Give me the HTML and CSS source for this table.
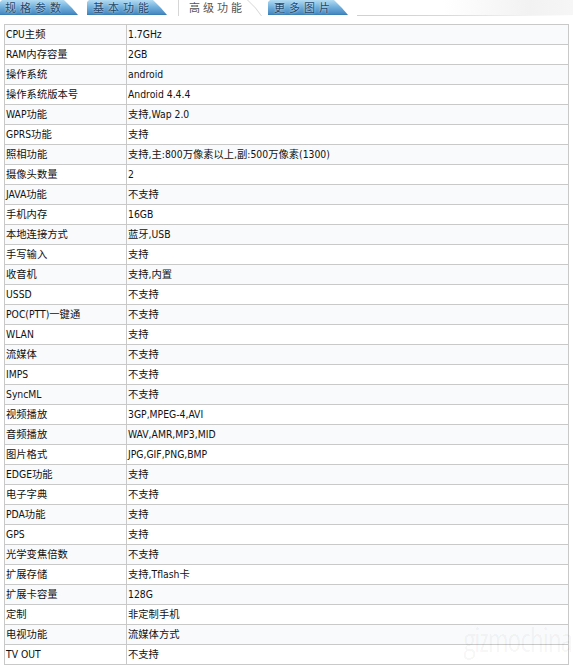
FILE: index.html
```html
<!DOCTYPE html>
<html>
<head>
<meta charset="utf-8">
<link rel="stylesheet" href="styles.css">
</head>
<body>
<div class="page">
  <div class="tabs">
    <div class="tab blue"><span>规格参数</span></div>
    <div class="tab blue"><span>基本功能</span></div>
    <div class="tab active"><div class="inner"><span>高级功能</span></div></div>
    <div class="tab blue"><span>更多图片</span></div>
    <div class="tabfill"></div>
  </div>
  <table class="spec">
    <tr><td class="k">CPU主频</td><td>1.7GHz</td></tr>
    <tr><td class="k">RAM内存容量</td><td>2GB</td></tr>
    <tr><td class="k">操作系统</td><td>android</td></tr>
    <tr><td class="k">操作系统版本号</td><td>Android 4.4.4</td></tr>
    <tr><td class="k">WAP功能</td><td>支持,Wap 2.0</td></tr>
    <tr><td class="k">GPRS功能</td><td>支持</td></tr>
    <tr><td class="k">照相功能</td><td>支持,主:800万像素以上,副:500万像素(1300)</td></tr>
    <tr><td class="k">摄像头数量</td><td>2</td></tr>
    <tr><td class="k">JAVA功能</td><td>不支持</td></tr>
    <tr><td class="k">手机内存</td><td>16GB</td></tr>
    <tr><td class="k">本地连接方式</td><td>蓝牙,USB</td></tr>
    <tr><td class="k">手写输入</td><td>支持</td></tr>
    <tr><td class="k">收音机</td><td>支持,内置</td></tr>
    <tr><td class="k">USSD</td><td>不支持</td></tr>
    <tr><td class="k">POC(PTT)一键通</td><td>不支持</td></tr>
    <tr><td class="k">WLAN</td><td>支持</td></tr>
    <tr><td class="k">流媒体</td><td>不支持</td></tr>
    <tr><td class="k">IMPS</td><td>不支持</td></tr>
    <tr><td class="k">SyncML</td><td>不支持</td></tr>
    <tr><td class="k">视频播放</td><td>3GP,MPEG-4,AVI</td></tr>
    <tr><td class="k">音频播放</td><td>WAV,AMR,MP3,MID</td></tr>
    <tr><td class="k">图片格式</td><td>JPG,GIF,PNG,BMP</td></tr>
    <tr><td class="k">EDGE功能</td><td>支持</td></tr>
    <tr><td class="k">电子字典</td><td>不支持</td></tr>
    <tr><td class="k">PDA功能</td><td>支持</td></tr>
    <tr><td class="k">GPS</td><td>支持</td></tr>
    <tr><td class="k">光学变焦倍数</td><td>不支持</td></tr>
    <tr><td class="k">扩展存储</td><td>支持,Tflash卡</td></tr>
    <tr><td class="k">扩展卡容量</td><td>128G</td></tr>
    <tr><td class="k">定制</td><td>非定制手机</td></tr>
    <tr><td class="k">电视功能</td><td>流媒体方式</td></tr>
    <tr><td class="k">TV OUT</td><td>不支持</td></tr>
  </table>
  <div class="watermark">gizmochina</div>
</div>
</body>
</html>
```
FILE: styles.css
```css
html, body {
  margin: 0;
  padding: 0;
  background: #fff;
}
.page {
  position: relative;
  width: 573px;
  height: 665px;
  overflow: hidden;
  font-family: "DejaVu Sans Condensed", "DejaVu Sans", "Noto Sans CJK SC", sans-serif;
  font-stretch: condensed;
  font-size: 10.3px;
  color: #111;
}
.tabs {
  display: flex;
  height: 16px;
  align-items: flex-start;
}
.tab {
  width: 80px;
  height: 15px;
  margin-right: 9px;
  flex: none;
  font-family: "Noto Sans CJK SC", sans-serif;
  font-size: 11px;
  line-height: 15px;
  letter-spacing: 4px;
  box-sizing: border-box;
}
.tab.blue {
  background: linear-gradient(#b3dbf2, #72b0dc 50%, #4689c0);
  clip-path: polygon(0 2px, 2px 0, calc(100% - 14px) 0, calc(100% - 6px) 8px, 100% 100%, 0 100%);
  color: #23476b;
  text-shadow: 0 0 2px #e8f4fb;
  padding-left: 6px;
  border-bottom: 1px solid #3a7fb6;
}
.tab.blue:first-child {
  width: 78px;
  padding-left: 5px;
}
.tab.active {
  width: 84px;
  height: 16px;
  margin-left: 2px;
  margin-right: 6px;
  background: #d6d6d6;
  clip-path: polygon(0 0, calc(100% - 14px) 0, calc(100% - 6px) 8px, 100% 100%, 0 100%);
  padding: 0 0 0 1px;
  letter-spacing: 3px;
}
.tab.active .inner {
  height: 16px;
  background: #fff;
  clip-path: polygon(0 0, calc(100% - 15px) 0, calc(100% - 7px) 8px, calc(100% - 1px) 100%, 0 100%);
  color: #555;
  padding-left: 10px;
}
.tabfill {
  flex: 1;
  height: 15px;
  border-bottom: 1px solid;
  border-image: linear-gradient(90deg, #d0d0d0, #d8d8d8 40%, #f4f4f4 80%, #fff) 1;
  background: linear-gradient(90deg, #fff 40%, #f2f2f2 80%, #f6f6f6);
}
.spec {
  margin: 8px 0 0 4px;
  width: 565px;
  border-collapse: collapse;
  table-layout: fixed;
}
.spec td {
  height: 19px;
  padding: 0 0 0 1px;
  border: 1px solid #c9c9c9;
  vertical-align: middle;
  white-space: nowrap;
  line-height: 19px;
}
.spec td.k {
  width: 120px;
}
.spec tr:nth-child(odd) td {
  background: #f8fafc;
}
.watermark {
  position: absolute;
  right: 1px;
  top: 622px;
  font-family: "Open Sans", sans-serif;
  font-size: 32px;
  line-height: 36px;
  color: rgba(0, 0, 0, 0.04);
  letter-spacing: -1.5px;
  pointer-events: none;
}
```
